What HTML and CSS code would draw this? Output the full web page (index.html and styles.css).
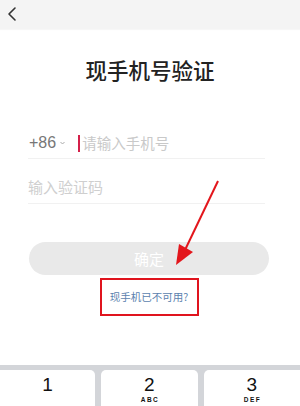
FILE: index.html
```html
<!DOCTYPE html>
<html lang="zh-CN">
<head>
<meta charset="utf-8">
<title>现手机号验证</title>
<link rel="stylesheet" href="styles.css">
</head>
<body>
<div class="screen">
  <header class="nav">
    <svg class="back" width="10" height="16" viewBox="0 0 10 16"><path d="M8 2 L2 8 L8 14" fill="none" stroke="#333" stroke-width="1.6" stroke-linecap="round" stroke-linejoin="round"/></svg>
  </header>
  <main class="content">
    <h1 class="title">现手机号验证</h1>
    <div class="form">
      <div class="row">
        <span class="code">+86</span>
        <svg class="caret" width="5" height="4" viewBox="0 0 5 4"><path d="M0.5 1 L2.5 3 L4.5 1" fill="none" stroke="#aaa" stroke-width="1"/></svg>
        <span class="cursor"></span>
        <span class="ph">请输入手机号</span>
      </div>
      <div class="row">
        <span class="ph ph2">输入验证码</span>
      </div>
      <div class="btn">确定</div>
      <div class="link-box"><span class="link">现手机已不可用?</span></div>
    </div>
  </main>
  <svg class="arrow" width="60" height="100" viewBox="0 0 60 100"><line x1="57" y1="1" x2="24" y2="70" stroke="#e3161c" stroke-width="2"/><polygon points="15,85 18,64 32,72" fill="#e3161c"/></svg>
  <div class="keyboard">
    <div class="key"><span class="num">1</span></div>
    <div class="key"><span class="num">2</span><span class="letters">ABC</span></div>
    <div class="key"><span class="num">3</span><span class="letters">DEF</span></div>
  </div>
</div>
</body>
</html>
```
FILE: styles.css
```css
* { box-sizing: border-box; margin: 0; padding: 0; }
html, body { width: 300px; height: 406px; overflow: hidden; background: #fff; }
body { font-family: "Noto Sans CJK SC", "Noto Sans", sans-serif; }
.screen { position: relative; width: 300px; height: 406px; display: flex; flex-direction: column; }
.nav { height: 29px; background: #f4f4f4; display: flex; align-items: center; padding-left: 7px; flex: none; box-shadow: 0 1px 1px rgba(0,0,0,0.03); }
.back { display: block; margin-top: -1px; }
.content { flex: none; display: flex; flex-direction: column; align-items: center; }
.title { margin-top: 26px; height: 30px; line-height: 30px; font-size: 21.5px; font-weight: 500; color: #222; letter-spacing: 0; }
.form { margin-top: 29px; width: 240px; margin-left: -2px; display: flex; flex-direction: column; }
.row { height: 45px; border-bottom: 1px solid #f1f1f1; display: flex; align-items: flex-end; padding-bottom: 5px; width: 237px; margin-left: -1px; }
.row + .row { height: 45px; padding-bottom: 6px; }
.code { font-family: "Liberation Sans", Arial, sans-serif; font-size: 16px; color: #777; line-height: 20px; margin-left: 1px; }
.caret { margin-left: 4px; margin-bottom: 8px; }
.cursor { width: 2px; height: 17px; background: #d4204a; margin-left: 13px; margin-bottom: 1px; }
.ph { font-size: 14.5px; line-height: 20px; color: #c9c9c9; margin-left: 2px; }
.ph2 { font-size: 15px; color: #cfcfcf; margin-left: 0; }
.btn { margin-top: 38px; height: 33px; border-radius: 17px; background: #e9e9e9; color: #fff; font-size: 15px; display: flex; align-items: center; justify-content: center; }
.link-box { margin: 3px auto 0; width: 99px; height: 38px; border: 2px solid #e0141e; display: flex; align-items: center; justify-content: center; }
.link { font-size: 10.5px; color: #5b7fae; line-height: 14px; }
.arrow { position: absolute; left: 161px; top: 180px; }
.keyboard { margin-top: auto; height: 41px; background: #d3d5d9; padding-top: 5px; display: grid; grid-template-columns: 95px 1fr 1fr; column-gap: 6px; overflow: hidden; flex: none; }
.key { background: #fff; height: 46px; border-radius: 5px 5px 0 0; display: flex; flex-direction: column; align-items: center; padding-top: 4px; font-family: "Liberation Sans", Arial, sans-serif; color: #111; }
.key:first-child { border-radius: 0 5px 0 0; }
.key:last-child { border-radius: 5px 0 0 0; }
.num { font-size: 19px; line-height: 22px; }
.letters { font-size: 6.5px; font-weight: bold; letter-spacing: 1.5px; line-height: 8px; margin-left: 1.5px; }
```
